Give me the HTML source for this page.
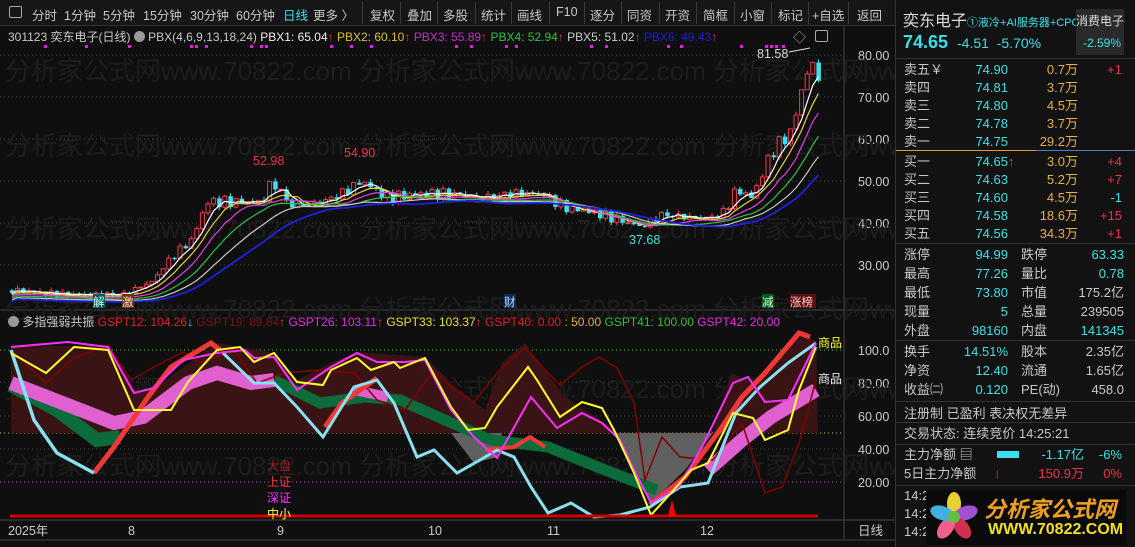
<!DOCTYPE html>
<html><head><meta charset="utf-8">
<style>
*{margin:0;padding:0;box-sizing:border-box}
body{width:1135px;height:547px;background:#0f0f10;overflow:hidden;position:relative;font-family:"Liberation Sans","Noto Sans CJK SC",sans-serif;color:#ccc;font-size:12px}
.tb{position:absolute;left:0;top:0;width:895px;height:26px;background:#161616;border-bottom:1px solid #333;white-space:nowrap}
.tb span{position:absolute;top:5px;font-size:12.5px;color:#c8c8c8}
.sep{position:absolute;top:2px;width:1px;height:22px;background:#3a3a3a}
.abs{position:absolute;white-space:nowrap}
.rp{position:absolute;left:895px;top:0;width:240px;height:547px;background:#121212;border-left:1px solid #333}
.row{position:absolute;left:0;width:240px;height:18px;font-size:13px;line-height:18px}
.row span{line-height:18px}
.row .l{position:absolute;left:8px;color:#c8c8c8}
.row .p{position:absolute;right:128px;color:#3de0e8}
.row .v{position:absolute;right:58px;color:#e6b04a}
.row .c{position:absolute;right:14px}
.row .l2{position:absolute;left:125px;color:#c8c8c8}
.row .v2{position:absolute;right:12px}
.hl{position:absolute;left:0;width:240px;height:1px;background:#333}
.r{color:#e8344e}.cy{color:#3de0e8}.w{color:#c8c8c8}
</style></head><body>
<div class="tb">
<span style="left:9px;top:6px;width:13px;height:12px;border:1px solid #aaa;border-radius:2px"></span>
<span style="left:32px">分时</span><span style="left:64px">1分钟</span><span style="left:103px">5分钟</span><span style="left:143px">15分钟</span><span style="left:190px">30分钟</span><span style="left:236px">60分钟</span><span style="left:283px;color:#3de0e8">日线</span><span style="left:313px">更多 〉</span>
<div class="sep" style="left:362px"></div><span style="left:370px">复权</span>
<div class="sep" style="left:400px"></div><span style="left:407px">叠加</span>
<div class="sep" style="left:437px"></div><span style="left:443px">多股</span>
<div class="sep" style="left:475px"></div><span style="left:481px">统计</span>
<div class="sep" style="left:511px"></div><span style="left:517px">画线</span>
<div class="sep" style="left:549px"></div><span style="left:556px">F10</span>
<div class="sep" style="left:584px"></div><span style="left:590px">逐分</span>
<div class="sep" style="left:621px"></div><span style="left:627px">同资</span>
<div class="sep" style="left:659px"></div><span style="left:665px">开资</span>
<div class="sep" style="left:696px"></div><span style="left:703px">简框</span>
<div class="sep" style="left:734px"></div><span style="left:740px">小窗</span>
<div class="sep" style="left:771px"></div><span style="left:778px">标记</span>
<div class="sep" style="left:808px"></div><span style="left:812px">+自选</span>
<div class="sep" style="left:848px"></div><span style="left:857px">返回</span>
</div>
<div class="abs" style="left:8px;top:28px;font-size:12px;color:#c8c8c8">301123 奕东电子(日线) <span style="display:inline-block;width:11px;height:11px;border-radius:50%;background:#999;vertical-align:-1px"></span> PBX(4,6,9,13,18,24) <span style="color:#eee">PBX1: 65.04</span><span class="r">↑</span> <span style="color:#d8c030">PBX2: 60.10</span><span class="r">↑</span> <span style="color:#c030c8">PBX3: 55.89</span><span class="r">↑</span> <span style="color:#30c040">PBX4: 52.94</span><span class="r">↑</span> <span style="color:#ccc">PBX5: 51.02</span><span class="r">↑</span> <span style="color:#2020d0">PBX6: 49.43</span><span class="r">↑</span></div>
<div class="abs" style="left:793px;top:27px;color:#aaa;font-size:13px">◇</div>
<div class="abs" style="left:815px;top:30px;width:13px;height:12px;border:1px solid #aaa;border-radius:2px"></div>

<svg class="abs" style="left:0;top:0" width="895" height="547" id="ch">
<g stroke="#444" stroke-dasharray="1,3" stroke-width="1">
<line x1="0" x2="844" y1="55" y2="55"/><line x1="0" x2="844" y1="97" y2="97"/><line x1="0" x2="844" y1="139" y2="139"/><line x1="0" x2="844" y1="181" y2="181"/><line x1="0" x2="844" y1="223" y2="223"/><line x1="0" x2="844" y1="265" y2="265"/>
<line x1="0" x2="844" y1="416" y2="416"/><line x1="0" x2="844" y1="449" y2="449"/><line x1="0" x2="844" y1="382" y2="382"/>
</g>
<line x1="0" x2="844" y1="350" y2="350" stroke="#60c040" stroke-dasharray="1,3"/>
<line x1="0" x2="844" y1="433" y2="433" stroke="#e0b040" stroke-dasharray="1,3"/>
<line x1="0" x2="844" y1="482" y2="482" stroke="#c040c0" stroke-dasharray="1,3"/>
<line x1="844" y1="26" x2="844" y2="540" stroke="#444"/>
<line x1="0" y1="310" x2="895" y2="310" stroke="#444"/>
<line x1="0" y1="520" x2="895" y2="520" stroke="#444"/>
<line x1="0" y1="540" x2="895" y2="540" stroke="#444"/>
<g fill="#ccc" font-size="12.5" font-family="Liberation Sans">
<text x="858" y="60">80.00</text><text x="858" y="102">70.00</text><text x="858" y="144">60.00</text><text x="858" y="186">50.00</text><text x="858" y="228">40.00</text><text x="858" y="270">30.00</text>
<text x="858" y="355">100.0</text><text x="858" y="388">80.00</text><text x="858" y="421">60.00</text><text x="858" y="454">40.00</text><text x="858" y="487">20.00</text>
<text x="8" y="535">2025年</text><text x="128" y="535">8</text><text x="277" y="535">9</text><text x="428" y="535">10</text><text x="547" y="535">11</text><text x="700" y="535">12</text><text x="858" y="535">日线</text>
</g>
<g fill="#1d1d1e" font-size="26" font-family="Liberation Sans,Noto Sans CJK SC">
<text x="5" y="80">分析家公式网www.70822.com  分析家公式网www.70822.com  分析家公式网ww</text>
<text x="5" y="155">分析家公式网www.70822.com  分析家公式网www.70822.com  分析家公式网ww</text>
<text x="5" y="238">分析家公式网www.70822.com  分析家公式网www.70822.com  分析家公式网ww</text>
<text x="5" y="318">分析家公式网www.70822.com  分析家公式网www.70822.com  分析家公式网ww</text>
<text x="5" y="398">分析家公式网www.70822.com  分析家公式网www.70822.com  分析家公式网ww</text>
<text x="5" y="475">分析家公式网www.70822.com  分析家公式网www.70822.com  分析家公式网ww</text>
</g>
<g id="cand"></g>
<g fill="#e8344e" font-size="12.5"><text x="253" y="165">52.98</text><text x="344" y="157">54.90</text></g>
<text x="629" y="244" fill="#3de0e8" font-size="12.5">37.68</text>
<text x="757" y="58" fill="#ddd" font-size="12.5">81.58</text>
<path d="M789,52 L810,48" stroke="#ddd" fill="none"/>
<g font-size="11.5">
<rect x="93" y="294" width="12" height="14" fill="#0a5a5a"/><text x="93" y="306" fill="#cfe">解</text>
<rect x="122" y="294" width="12" height="14" fill="#6a3410"/><text x="122" y="306" fill="#fdc">激</text>
<rect x="504" y="294" width="12" height="14" fill="#0a2a5a"/><text x="504" y="306" fill="#cdf">财</text>
<rect x="762" y="294" width="12" height="14" fill="#0a5a20"/><text x="762" y="306" fill="#cfc">减</text>
<rect x="790" y="294" width="26" height="14" fill="#5a1010"/><text x="790" y="306" fill="#fcc">涨榜</text>
</g>

<polygon fill="#3a1414" points="11,347 108,345 137,393 166,380 217,343 274,353 297,380 331,363 357,352 425,357 451,383 485,410 502,363 525,343 565,397 611,427 617,433 713,433 731,373 748,381 765,373 799,337 816,340 818,433 11,433"/>
<polygon fill="#606060" points="451,433 474,463 497,457 502,433"/>
<polygon fill="#606060" points="614,433 651,503 685,470 713,433"/>
<polyline fill="none" stroke="#0b6b3a" stroke-width="14" points="11,385 57,410 97,440 120,437"/>
<polyline fill="none" stroke="#0b6b3a" stroke-width="11" points="274,380 320,403 365,397 400,400 445,420 491,440 548,447 605,470 657,490"/>
<polyline fill="none" stroke="#e060d0" stroke-width="14" points="11,383 114,423 143,417 188,383 217,373 251,383 274,380"/>
<polyline fill="none" stroke="#e060d0" stroke-width="10" points="354,390 388,397"/>
<polyline fill="none" stroke="#e060d0" stroke-width="14" points="708,470 742,440 771,417 816,390"/>
<polyline fill="none" stroke="#800000" stroke-width="1.5" points="11,350 46,383 74,358 108,345 131,380 154,367 183,352 200,363 234,350 257,383 285,373 320,370 354,373 377,400 405,410 434,370 451,387 474,402 497,373 514,357 525,348 548,373 560,385 582,367 599,357 617,368 634,403 645,480 662,437 680,457 713,460 742,423 765,493 782,487 799,443 816,380"/>
<polyline fill="none" stroke="#f03838" stroke-width="5" points="94,473 114,447 148,397 171,367 211,343 220,350"/>
<polyline fill="none" stroke="#f03838" stroke-width="5" points="325,427 342,403 377,378"/>
<polyline fill="none" stroke="#f03838" stroke-width="4" points="485,450 514,447 530,437 545,447"/>
<polyline fill="none" stroke="#f03838" stroke-width="5" points="650,505 685,477 720,430 742,397 765,373 799,333 810,337"/>
<polyline fill="none" stroke="#8ae0f0" stroke-width="3.5" points="11,350 34,420 57,453 94,473"/>
<polyline fill="none" stroke="#8ae0f0" stroke-width="3" points="223,353 254,383 274,383 297,407 323,437 354,387 377,380 394,403 417,457 434,450 457,473 480,460 497,450 514,457 531,487 548,513 571,503 594,517 620,515 650,507 680,487 708,483 736,413 760,387 788,363 816,343"/>
<polyline fill="none" stroke="#ff30ff" stroke-width="2" points="11,347 68,342 108,347 134,393 154,388 183,360 217,353 245,350 254,358 274,357 297,390 331,367 357,353 377,362 405,362 425,360 451,410 474,437 497,458 531,397 557,428 582,413 602,423 620,440 634,470 651,503 679,487 702,447 733,383 748,377 765,402 788,400 816,343"/>
<polyline fill="none" stroke="#ffff30" stroke-width="2" points="11,353 46,373 74,347 108,350 134,410 171,410 188,382 217,350 240,347 254,362 274,353 297,382 323,385 331,370 357,358 371,370 394,362 400,368 425,358 451,407 468,430 485,428 497,407 528,367 537,380 560,417 582,402 602,408 614,430 634,473 651,515 671,493 691,470 708,463 733,413 753,418 765,440 788,430 799,390 816,347"/>
<line x1="10" y1="516" x2="818" y2="516" stroke="#c00" stroke-width="3"/>
<polygon points="668,516 672,500 676,516" fill="#f00"/>
<g font-size="12"><text x="267" y="470" fill="#a02020">大盘</text><text x="267" y="486" fill="#f03838">上证</text><text x="267" y="502" fill="#ff30ff">深证</text><text x="267" y="518" fill="#ffff30">中小</text>
<text x="818" y="347" fill="#ffff30">商品</text><text x="818" y="383" fill="#eee">商品</text></g>
</svg>
<div class="abs" style="left:8px;top:313px;font-size:12px;color:#c8c8c8"><span style="display:inline-block;width:11px;height:11px;border-radius:50%;background:#999;vertical-align:-1px"></span> 多指强弱共振 <span style="color:#e02020">GSPT12: 104.26</span><span class="cy">↓</span> <span style="color:#701818">GSPT19: 89.84</span><span class="r">↑</span> <span style="color:#e030e0">GSPT26: 103.11</span><span class="r">↑</span> <span style="color:#e8e030">GSPT33: 103.37</span><span class="r">↑</span> <span style="color:#e02020">GSPT40: 0.00</span> <span style="color:#e0b040">: 50.00</span> <span style="color:#30c030">GSPT41: 100.00</span> <span style="color:#e030e0">GSPT42: 20.00</span></div>

<div class="rp">
<div class="abs" style="left:7px;top:7px;font-size:16px;color:#ddd">奕东电子<span style="font-size:11px;color:#3de0e8">①液冷+AI服务器+CPO</span></div>
<div class="abs" style="left:180px;top:9px;width:48px;height:46px;background:#2a2a2a"></div>
<div class="abs" style="left:180px;top:12px;font-size:12px;color:#ddd">消费电子</div>
<div class="abs" style="left:187px;top:36px;font-size:12px"><span class="cy">-2.59%</span></div>
<div class="abs" style="left:7px;top:32px;font-size:18px;font-weight:bold"><span class="cy">74.65</span></div>
<div class="abs" style="left:61px;top:35px;font-size:14px"><span class="cy">-4.51 &nbsp;-5.70%</span></div>
<div class="hl" style="top:58px"></div>
<div class="row" style="top:61px"><span class="l">卖五￥</span><span class="p">74.90</span><span class="v">0.7万</span><span class="c r">+1</span></div>
<div class="row" style="top:79px"><span class="l">卖四</span><span class="p">74.81</span><span class="v">3.7万</span></div>
<div class="row" style="top:97px"><span class="l">卖三</span><span class="p">74.80</span><span class="v">4.5万</span></div>
<div class="row" style="top:115px"><span class="l">卖二</span><span class="p">74.78</span><span class="v">3.7万</span></div>
<div class="row" style="top:133px"><span class="l">卖一</span><span class="p">74.75</span><span class="v">29.2万</span></div>
<div class="abs" style="left:0;top:150px;width:140px;height:1px;background:#e0a030"></div><div class="abs" style="left:140px;top:150px;width:100px;height:1px;background:#4a80c0"></div>
<div class="row" style="top:153px"><span class="l">买一</span><span class="p">74.65</span><span class="abs r" style="left:112px">↑</span><span class="v">3.0万</span><span class="c r">+4</span></div>
<div class="row" style="top:171px"><span class="l">买二</span><span class="p">74.63</span><span class="v">5.2万</span><span class="c r">+7</span></div>
<div class="row" style="top:189px"><span class="l">买三</span><span class="p">74.60</span><span class="v">4.5万</span><span class="c cy">-1</span></div>
<div class="row" style="top:207px"><span class="l">买四</span><span class="p">74.58</span><span class="v">18.6万</span><span class="c r">+15</span></div>
<div class="row" style="top:225px"><span class="l">买五</span><span class="p">74.56</span><span class="v">34.3万</span><span class="c r">+1</span></div>
<div class="hl" style="top:243px"></div>
<div class="row" style="top:246px"><span class="l">涨停</span><span class="p r">94.99</span><span class="l2">跌停</span><span class="v2 cy">63.33</span></div>
<div class="row" style="top:265px"><span class="l">最高</span><span class="p">77.26</span><span class="l2">量比</span><span class="v2 cy">0.78</span></div>
<div class="row" style="top:284px"><span class="l">最低</span><span class="p">73.80</span><span class="l2">市值</span><span class="v2 w">175.2亿</span></div>
<div class="row" style="top:303px"><span class="l">现量</span><span class="p">5</span><span class="l2">总量</span><span class="v2 w">239505</span></div>
<div class="row" style="top:322px"><span class="l">外盘</span><span class="p r">98160</span><span class="l2">内盘</span><span class="v2 cy">141345</span></div>
<div class="hl" style="top:340px"></div>
<div class="row" style="top:343px"><span class="l">换手</span><span class="p w">14.51%</span><span class="l2">股本</span><span class="v2 w">2.35亿</span></div>
<div class="row" style="top:362px"><span class="l">净资</span><span class="p w">12.40</span><span class="l2">流通</span><span class="v2 w">1.65亿</span></div>
<div class="row" style="top:381px"><span class="l">收益㈡</span><span class="p w">0.120</span><span class="l2">PE(动)</span><span class="v2 w">458.0</span></div>
<div class="hl" style="top:401px"></div>
<div class="row" style="top:405px"><span class="l">注册制 已盈利 表决权无差异</span></div>
<div class="hl" style="top:422px"></div>
<div class="row" style="top:425px"><span class="l">交易状态: 连续竞价 14:25:21</span></div>
<div class="hl" style="top:444px"></div>
<div class="row" style="top:446px"><span class="l">主力净额 ▤</span><span class="abs" style="left:101px;top:5px;width:22px;height:7px;background:#3de0e8"></span><span class="abs cy" style="right:52px">-1.17亿</span><span class="c cy">-6%</span></div>
<div class="row" style="top:465px"><span class="l">5日主力净额</span><span class="abs r" style="left:100px;font-size:9px">|</span><span class="abs r" style="right:52px">150.9万</span><span class="c r">0%</span></div>
<div class="hl" style="top:485px"></div>
<div class="row" style="top:487px"><span class="l">14:2</span></div>
<div class="row" style="top:505px"><span class="l">14:2</span></div>
<div class="row" style="top:523px"><span class="l">14:2</span></div>
<div class="abs" style="left:30px;top:490px;width:200px;height:55px;background:#0a0a0a"></div>
<svg class="abs" style="left:30px;top:490px" width="60" height="56">
<g transform="translate(28,27)">
<ellipse cx="0" cy="-13" rx="7" ry="12" fill="#e8d030"/>
<ellipse cx="12" cy="-4" rx="7" ry="12" fill="#a050d0" transform="rotate(72 12 -4)"/>
<ellipse cx="8" cy="11" rx="7" ry="12" fill="#d03050" transform="rotate(144 8 11)"/>
<ellipse cx="-8" cy="11" rx="7" ry="12" fill="#f06090" transform="rotate(216 -8 11)"/>
<ellipse cx="-12" cy="-4" rx="7" ry="12" fill="#40b0e0" transform="rotate(288 -12 -4)"/>
<circle r="6" fill="#60c040"/></g></svg>
<div class="abs" style="left:88px;top:492px;font-size:22px;font-weight:bold;color:#f0a020;font-style:italic">分析家公式网</div>
<div class="abs" style="left:92px;top:521px;font-size:16px;font-weight:bold;color:#f0e020">WWW.70822.COM</div>
</div>

<script>
(function(){
var pts=[[10,24],[60,23],[120,23],[150,26],[170,32],[190,36],[205,45],[230,45],[260,45],[270,50],[290,44],[320,45],[340,47],[360,50],[385,46],[420,47],[450,47],[480,46],[510,47],[540,47],[560,44],[600,42],[640,39],[660,42],[700,41],[720,42],[735,48],[750,46],[770,57],[790,62],[800,72],[808,78],[818,75]];
function P(x){for(var i=1;i<pts.length;i++){if(x<=pts[i][0]){var a=pts[i-1],b=pts[i];return a[1]+(b[1]-a[1])*(x-a[0])/(b[0]-a[0]);}}return pts[pts.length-1][1];}
function Y(p){return 55+(80-p)*4.2;}
var cl=[],xs=[],h='',prev=24;
for(var x=10;x<=818;x+=5.6){var c=P(x)+(Math.sin(x*1.7)*0.8+Math.sin(x*0.43)*0.6)*(P(x)/45);xs.push(x);cl.push(c);
var o=prev,up=c>=o,hi=Math.max(o,c)+Math.abs(Math.sin(x*3.1))*0.8,lo=Math.min(o,c)-Math.abs(Math.cos(x*2.3))*0.7;
var col=up?'#f03a4a':'#3de0f0';
h+='<line x1="'+(x+2)+'" x2="'+(x+2)+'" y1="'+Y(hi)+'" y2="'+Y(lo)+'" stroke="'+col+'"/>';
var t=Y(Math.max(o,c)),bh=Math.max(1,Y(Math.min(o,c))-t);
h+=up?'<rect x="'+x+'" y="'+t+'" width="4" height="'+bh+'" fill="#0f0f10" stroke="'+col+'"/>':'<rect x="'+x+'" y="'+t+'" width="4.5" height="'+bh+'" fill="'+col+'"/>';
prev=c;}
var per=[4,6,9,13,18,24],cols=['#ffffff','#e8d040','#e040e0','#30c040','#c8c8c8','#2020e0'];
for(var k=0;k<6;k++){var n=per[k],pp=[];for(var i=0;i<cl.length;i++){var sm=0,m=0;for(var j=Math.max(0,i-n+1);j<=i;j++){sm+=cl[j];m++;}pp.push((xs[i]+2)+','+Y(sm/m-(k*0.4)));}
h+='<polyline fill="none" stroke="'+cols[k]+'" stroke-width="'+(k==5?1.8:1.2)+'" points="'+pp.join(' ')+'"/>';}
var dots=[44,85,128,190,195,205,250,260,265,330,350,370,455,470,505,515,590,605,667,680,740,765,770,775,782];
for(var i=0;i<dots.length;i++)h+='<rect x="'+dots[i]+'" y="45" width="3" height="3" fill="#e020e0"/>';
document.getElementById('cand').innerHTML=h;
})();
</script>
</body></html>
